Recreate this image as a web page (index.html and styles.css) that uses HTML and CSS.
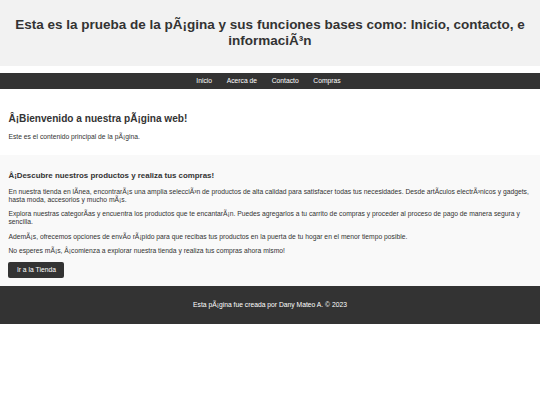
FILE: index.html
```html
<!DOCTYPE html>
<html lang="es">
<head>
<meta charset="utf-8">
<title>Prueba</title>
<link rel="stylesheet" href="styles.css">
</head>
<body>
<header class="site-header">
  <h1 class="site-title">Esta es la prueba de la pÃ¡gina y sus funciones bases como: Inicio, contacto, e informaciÃ³n</h1>
</header>
<nav class="site-nav">
  <a class="nav-link" href="#">Inicio</a>
  <a class="nav-link" href="#">Acerca de</a>
  <a class="nav-link" href="#">Contacto</a>
  <a class="nav-link" href="#">Compras</a>
</nav>
<main class="main">
  <h2 class="main-title">Â¡Bienvenido a nuestra pÃ¡gina web!</h2>
  <p class="text">Este es el contenido principal de la pÃ¡gina.</p>
</main>
<section class="shop">
  <h3 class="shop-title">Â¡Descubre nuestros productos y realiza tus compras!</h3>
  <p class="text">En nuestra tienda en lÃnea, encontrarÃ¡s una amplia selecciÃ³n de productos de alta calidad para satisfacer todas tus necesidades. Desde artÃculos electrÃ³nicos y gadgets, hasta moda, accesorios y mucho mÃ¡s.</p>
  <p class="text">Explora nuestras categorÃas y encuentra los productos que te encantarÃ¡n. Puedes agregarlos a tu carrito de compras y proceder al proceso de pago de manera segura y sencilla.</p>
  <p class="text">AdemÃ¡s, ofrecemos opciones de envÃo rÃ¡pido para que recibas tus productos en la puerta de tu hogar en el menor tiempo posible.</p>
  <p class="text">No esperes mÃ¡s, Â¡comienza a explorar nuestra tienda y realiza tus compras ahora mismo!</p>
  <a class="btn" href="#">Ir a la Tienda</a>
</section>
<footer class="site-footer">
  <p class="footer-text">Esta pÃ¡gina fue creada por Dany Mateo A. © 2023</p>
</footer>
</body>
</html>
```
FILE: styles.css
```css
html, body {
  margin: 0;
  padding: 0;
  background: #ffffff;
}
body {
  font-family: "Liberation Sans", Arial, sans-serif;
  font-size: 6.75px;
  line-height: 7.76px;
  color: #333333;
}
.site-header {
  background: #f2f2f2;
  padding: 8.44px;
  text-align: center;
}
.site-title {
  font-size: 13.5px;
  line-height: 15.53px;
  font-weight: bold;
  margin: 9.04px 0;
  color: #333333;
}
.site-nav {
  margin-top: 7px;
  background: #333333;
  height: 16px;
  display: flex;
  justify-content: center;
  align-items: center;
  gap: 14.6px;
  padding-right: 3px;
}
.nav-link {
  color: #ffffff;
  text-decoration: none;
  font-size: 6.75px;
}
.main {
  margin-top: 7px;
  padding: 8.44px 8.44px 7.4px;
}
.main-title {
  font-size: 10.1px;
  line-height: 11.64px;
  margin: 8.4px 0;
  color: #333333;
}
.text {
  margin: 6.75px 0;
}
.shop {
  background: #f9f9f9;
  padding: 8.44px;
}
.shop-title {
  font-size: 7.9px;
  line-height: 9.08px;
  margin: 7.9px 0;
  color: #333333;
}
.btn {
  display: inline-block;
  background: #333333;
  color: #ffffff;
  text-decoration: none;
  padding: 4.22px 8.44px;
  border-radius: 2px;
  line-height: 7.76px;
  vertical-align: top;
}
.site-footer {
  background: #333333;
  color: #ffffff;
  padding: 8.44px;
  text-align: center;
}
.footer-text {
  margin: 6.75px 0;
}
```
